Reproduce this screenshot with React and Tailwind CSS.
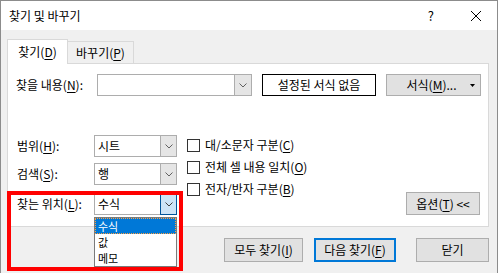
import React from 'react';

const font = { fontFamily: '"Noto Sans CJK KR", "Noto Sans", sans-serif' };

function Chevron({ color = "#606060" }) {
    return (
        <svg width="8" height="5" viewBox="0 0 8 5">
            <path d="M0.5 0.5 L4 4 L7.5 0.5" fill="none" stroke={color} strokeWidth="1" />
        </svg>
    );
}

function Key({ k }) {
    return <>(<u className="underline-offset-2">{k}</u>)</>;
}

function Select({ value, focused }) {
    return (
        <div className="w-[83px] h-[22px] flex border border-[#adadad] bg-white">
            <span className="flex-1 pl-[3px] text-[12px] leading-[20px]">{value}</span>
            {focused ? (
                <div className="w-[17px] flex items-center justify-center bg-[#cce4f7] border border-[#005499] -my-px -mr-px">
                    <Chevron color="#404040" />
                </div>
            ) : (
                <div className="w-[16px] flex items-center justify-center bg-[#e5e5e5] border-l border-[#adadad]">
                    <Chevron />
                </div>
            )}
        </div>
    );
}

function Check({ children }) {
    return (
        <div className="h-[22px] flex items-center">
            <div className="w-[13px] h-[13px] border border-[#333] bg-white" />
            <span className="ml-[5px] text-[12px]">{children}</span>
        </div>
    );
}

export default function App() {
    return (
        <div style={font} className="relative w-[498px] h-[273px] bg-[#f0f0f0] border-x border-t border-[#8c8c8c] text-black text-[12px] flex flex-col overflow-hidden">
            {/* title bar */}
            <div className="h-[29px] bg-white flex items-center pl-[8px] shrink-0">
                <span className="text-[12px]">찾기 및 바꾸기</span>
                <span className="ml-auto text-[13px]">?</span>
                <svg className="ml-[37px] mr-[16px]" width="10" height="10" viewBox="0 0 10 10">
                    <path d="M0 0 L10 10 M10 0 L0 10" stroke="#000" strokeWidth="1" />
                </svg>
            </div>

            {/* tabs */}
            <div className="flex items-end pl-[6px] pt-[9px]">
                <div className="relative z-10 w-[61px] h-[25px] -mb-px bg-white border-x border-t border-[#d9d9d9] flex items-center justify-center">
                    찾기<Key k="D" />
                </div>
                <div className="w-[66px] h-[22px] border-t border-r border-[#d9d9d9] flex items-center justify-center">
                    바꾸기<Key k="P" />
                </div>
            </div>

            {/* panel */}
            <div className="ml-[6px] w-[482px] h-[164px] bg-white border border-[#d9d9d9] pl-[8px] pr-[7px] pt-[10px] flex flex-col">
                <div className="h-[22px] flex items-center">
                    <span className="w-[81px]">찾을 내용<Key k="N" />:</span>
                    <div className="w-[155px] h-[22px] flex border border-[#adadad]">
                        <div className="flex-1" />
                        <div className="w-[17px] flex items-center justify-center bg-[#e5e5e5] border-l border-[#adadad]">
                            <Chevron />
                        </div>
                    </div>
                    <button className="ml-[10px] w-[114px] h-[22px] border border-black bg-white text-[12px]">설정된 서식 없음</button>
                    <button className="ml-[10px] w-[95px] h-[22px] border border-[#adadad] bg-[#e1e1e1] text-[12px] flex items-center">
                        <span className="flex-1 text-center pl-[6px]">서식<Key k="M" />...</span>
                        <svg className="mr-[5px]" width="5" height="3" viewBox="0 0 5 3">
                            <path d="M0 0 L5 0 L2.5 3 Z" fill="#000" />
                        </svg>
                    </button>
                </div>

                <div className="mt-[39px] flex items-end">
                    <div className="w-[161px] flex flex-col">
                        <div className="h-[22px] flex items-center">
                            <span className="w-[78px] pl-[1px]">범위<Key k="H" />:</span>
                            <Select value="시트" />
                        </div>
                        <div className="mt-[6px] h-[22px] flex items-center">
                            <span className="w-[78px] pl-[1px]">검색<Key k="S" />:</span>
                            <Select value="행" />
                        </div>
                        <div className="mt-[8px] h-[22px] flex items-center">
                            <span className="w-[78px] pl-[1px]">찾는 위치<Key k="L" />:</span>
                            <Select value="수식" focused />
                        </div>
                    </div>
                    <div className="ml-[10px] self-start -mt-px flex flex-col">
                        <Check>대/소문자 구분<Key k="C" /></Check>
                        <Check>전체 셀 내용 일치<Key k="O" /></Check>
                        <Check>전자/반자 구분<Key k="B" /></Check>
                    </div>
                    <button className="ml-auto mr-[1px] w-[74px] h-[23px] border border-[#adadad] bg-[#e1e1e1] text-[12px]">
                        옵션<Key k="T" /> &lt;&lt;
                    </button>
                </div>
            </div>

            {/* bottom buttons */}
            <div className="mt-[11px] pr-[8px] flex justify-end items-center">
                <button className="w-[79px] h-[24px] border border-[#adadad] bg-[#e1e1e1] text-[12px]">모두 찾기<Key k="I" /></button>
                <button className="ml-[11px] w-[82px] h-[24px] border-2 border-[#0078d7] bg-[#e1e1e1] text-[12px]">다음 찾기<Key k="F" /></button>
                <button className="ml-[20px] w-[73px] h-[24px] border border-[#adadad] bg-[#e1e1e1] text-[12px]">닫기</button>
            </div>

            {/* open dropdown list */}
            <div className="absolute left-[93px] top-[216px] w-[83px] border border-[#7a7a7a] bg-white z-20 text-[11px]">
                <div className="h-[16px] flex items-center bg-[#0078d7] text-white border border-dotted border-[#ffa040] pl-[2px] leading-[14px]">수식</div>
                <div className="h-[16px] flex items-center pl-[3px] leading-[16px]">값</div>
                <div className="h-[16px] flex items-center pl-[3px] leading-[16px]">메모</div>
            </div>

            {/* red highlight */}
            <div className="absolute left-[6px] top-[190px] w-[176px] h-[80px] border-4 border-[#ff0000] z-30 pointer-events-none" />
        </div>
    );
}
